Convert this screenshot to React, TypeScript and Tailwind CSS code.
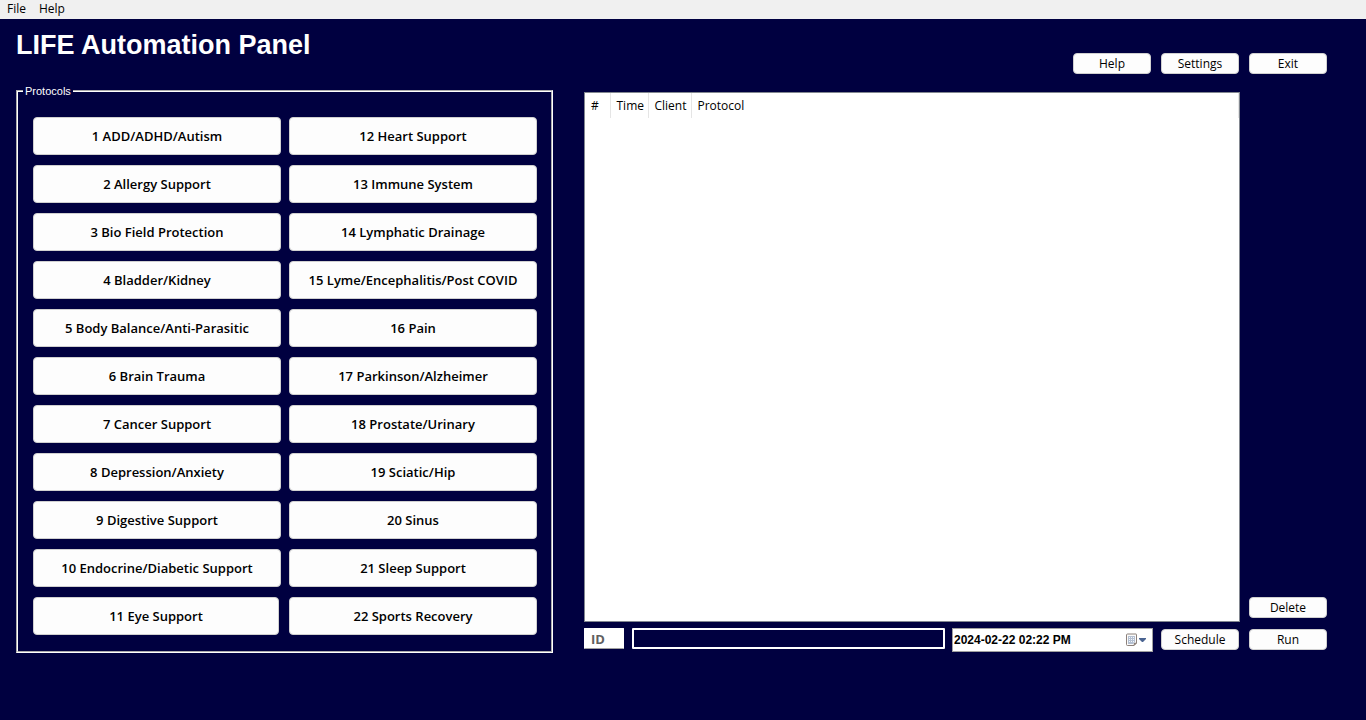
import React from 'react';

const leftProtocols = [
  '1 ADD/ADHD/Autism',
  '2 Allergy Support',
  '3 Bio Field Protection',
  '4 Bladder/Kidney',
  '5 Body Balance/Anti-Parasitic',
  '6 Brain Trauma',
  '7 Cancer Support',
  '8 Depression/Anxiety',
  '9 Digestive Support',
  '10 Endocrine/Diabetic Support',
  '11 Eye Support',
];

const rightProtocols = [
  '12 Heart Support',
  '13 Immune System',
  '14 Lymphatic Drainage',
  '15 Lyme/Encephalitis/Post COVID',
  '16 Pain',
  '17 Parkinson/Alzheimer',
  '18 Prostate/Urinary',
  '19 Sciatic/Hip',
  '20 Sinus',
  '21 Sleep Support',
  '22 Sports Recovery',
];

function SmallButton({ children }: { children: React.ReactNode }) {
  return (
    <button
      type="button"
      className="h-[21px] w-[78px] shrink-0 rounded border border-[#d0d0d0] bg-[#fdfdfd] text-center text-xs leading-[18px] text-black"
    >
      {children}
    </button>
  );
}

function ProtocolColumn({ items, shortLast = false }: { items: string[]; shortLast?: boolean }) {
  return (
    <div className="flex min-w-0 flex-1 flex-col gap-2.5">
      {items.map((label, i) => (
        <div key={label} className={shortLast && i === items.length - 1 ? 'pr-0.5' : ''}>
          <button
            type="button"
            className="block h-[38px] w-full rounded border border-[#d0d0d0] bg-[#fdfdfd] text-[13px] leading-5 font-semibold text-black"
          >
            {label}
          </button>
        </div>
      ))}
    </div>
  );
}

function CalendarIcon() {
  return (
    <svg width="21" height="14" viewBox="0 0 21 14" aria-hidden="true">
      <path d="M1.5 1h8.500q.5 0 .5 .5v8.500l-2.500 2.500h-6.500q-1 0-1-1v-9.500q0-1 1-1z" fill="#fbfaf9" stroke="#8b807b" />
      <path d="M8 12.500v-2.500h2.500z" fill="#8b807b" stroke="#8b807b" strokeWidth=".5" />
      <path d="M2 3h7v6.500H7.500V11H2z" fill="#b4c0d2" />
      <path d="M3 4h1v1H3zM5 4h1v1H5zM7 4h1v1H7zM3 6h1v1H3zM5 6h1v1H5zM7 6h1v1H7zM3 8h1v1H3zM5 8h1v1H5zM7 8h1v1H7z" fill="#f4f7fb" />
      <path d="M13 5h7v1l-3 3h-1l-3-3z" fill="#4a6491" />
    </svg>
  );
}

export default function App() {
  return (
    <div className="min-h-screen bg-[#000040] font-['Open_Sans','Noto_Sans',sans-serif] text-xs text-black">
      <nav className="flex h-[19px] items-start gap-[13px] bg-[#f0f0f0] px-[7px] text-xs leading-[18px]">
        <button type="button">File</button>
        <button type="button">Help</button>
      </nav>

      <header className="flex items-start justify-between pt-2.5 pr-[39px] pl-4">
        <h1 className="font-['Liberation_Sans',sans-serif] text-[27px] leading-8 font-bold text-white">
          LIFE Automation Panel
        </h1>
        <div className="flex gap-2.5 pt-6">
          <SmallButton>Help</SmallButton>
          <SmallButton>Settings</SmallButton>
          <SmallButton>Exit</SmallButton>
        </div>
      </header>

      <main className="grid grid-cols-[537fr_743fr] gap-[31px] pt-[11px] pr-[39px] pl-4">
        <fieldset className="min-w-0 border-2 border-white pt-5 pr-3.5 pb-4 pl-[15px] [border-style:groove]">
          <legend className="-ml-2.5 px-0.5 font-['Liberation_Sans',sans-serif] text-[11px] leading-3 text-white">
            Protocols
          </legend>
          <div className="flex gap-2">
            <ProtocolColumn items={leftProtocols} shortLast />
            <ProtocolColumn items={rightProtocols} />
          </div>
        </fieldset>

        <section className="flex min-w-0 flex-col gap-1.5 pt-[7px]">
          <div className="flex flex-1 items-end gap-[9px]">
            <div className="flex-1 self-stretch border border-[#828790] bg-white">
              <table className="w-full border-collapse text-left">
                <thead>
                  <tr className="h-[25px] [&>th]:border-r [&>th]:border-[#e5e5e5] [&>th]:pl-1.5 [&>th]:font-normal">
                    <th scope="col" className="w-[25px]">#</th>
                    <th scope="col" className="w-[38px]">Time</th>
                    <th scope="col" className="w-[43px]">Client</th>
                    <th scope="col">Protocol</th>
                  </tr>
                </thead>
                <tbody />
              </table>
            </div>
            <div className="pb-1">
              <SmallButton>Delete</SmallButton>
            </div>
          </div>

          <form className="flex h-[25px] items-start" onSubmit={(e) => e.preventDefault()}>
            <input
              type="text"
              aria-label="ID"
              placeholder="ID"
              className="mr-2 h-[21px] w-10 rounded-[1px] border border-white border-b-[#a0a0a0] bg-white px-1.5 text-[13px] font-bold placeholder:text-[#606060]"
            />
            <input
              type="text"
              aria-label="Client"
              className="mr-[7px] h-[21px] min-w-0 flex-1 rounded-[1px] border-2 border-white bg-[#000040] px-1 text-white"
            />
            <div className="mr-2 flex h-6 w-[201px] items-center border border-[#a0a0a0] bg-white pr-[5px] pl-px">
              <input
                type="text"
                aria-label="Scheduled time"
                defaultValue="2024-02-22 02:22 PM"
                className="min-w-0 flex-1 font-['Liberation_Sans',sans-serif] text-xs font-bold"
              />
              <button type="button" aria-label="Open calendar">
                <CalendarIcon />
              </button>
            </div>
            <div className="flex gap-2.5 pt-px">
              <SmallButton>Schedule</SmallButton>
              <SmallButton>Run</SmallButton>
            </div>
          </form>
        </section>
      </main>
    </div>
  );
}
